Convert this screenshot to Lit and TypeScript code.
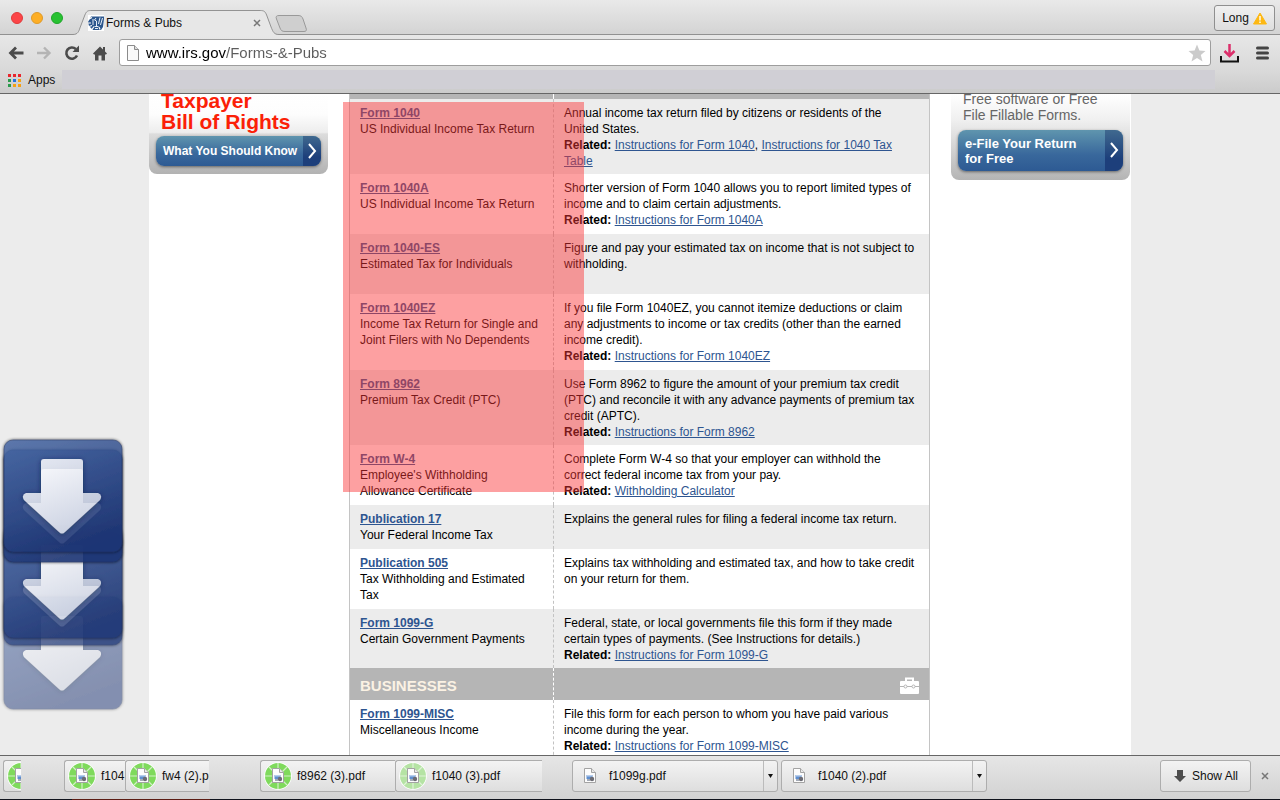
import { LitElement, html, css, svg, nothing } from "lit";
import { customElement } from "lit/decorators.js";

interface FormRow {
  name: string;
  sub: string[];
  desc: string[];
  related?: string[][];
  size?: string;
}

const individualForms: FormRow[] = [
  {
    name: "Form 1040",
    sub: ["US Individual Income Tax Return"],
    desc: ["Annual income tax return filed by citizens or residents of the", "United States."],
    related: [["Instructions for Form 1040"], ["Instructions for 1040 Tax", "Table"]],
    size: "tight",
  },
  {
    name: "Form 1040A",
    sub: ["US Individual Income Tax Return"],
    desc: ["Shorter version of Form 1040 allows you to report limited types of", "income and to claim certain adjustments."],
    related: [["Instructions for Form 1040A"]],
  },
  {
    name: "Form 1040-ES",
    sub: ["Estimated Tax for Individuals"],
    desc: ["Figure and pay your estimated tax on income that is not subject to", "withholding."],
    size: "roomy",
  },
  {
    name: "Form 1040EZ",
    sub: ["Income Tax Return for Single and", "Joint Filers with No Dependents"],
    desc: [
      "If you file Form 1040EZ, you cannot itemize deductions or claim",
      "any adjustments to income or tax credits (other than the earned",
      "income credit).",
    ],
    related: [["Instructions for Form 1040EZ"]],
  },
  {
    name: "Form 8962",
    sub: ["Premium Tax Credit (PTC)"],
    desc: [
      "Use Form 8962 to figure the amount of your premium tax credit",
      "(PTC) and reconcile it with any advance payments of premium tax",
      "credit (APTC).",
    ],
    related: [["Instructions for Form 8962"]],
    size: "tight",
  },
  {
    name: "Form W-4",
    sub: ["Employee's Withholding", "Allowance Certificate"],
    desc: ["Complete Form W-4 so that your employer can withhold the", "correct federal income tax from your pay."],
    related: [["Withholding Calculator"]],
  },
  {
    name: "Publication 17",
    sub: ["Your Federal Income Tax"],
    desc: ["Explains the general rules for filing a federal income tax return."],
  },
  {
    name: "Publication 505",
    sub: ["Tax Withholding and Estimated", "Tax"],
    desc: ["Explains tax withholding and estimated tax, and how to take credit", "on your return for them."],
  },
  {
    name: "Form 1099-G",
    sub: ["Certain Government Payments"],
    desc: ["Federal, state, or local governments file this form if they made", "certain types of payments. (See Instructions for details.)"],
    related: [["Instructions for Form 1099-G"]],
    size: "tight",
  },
];

const businessForms: FormRow[] = [
  {
    name: "Form 1099-MISC",
    sub: ["Miscellaneous Income"],
    desc: ["File this form for each person to whom you have paid various", "income during the year."],
    related: [["Instructions for Form 1099-MISC"]],
  },
];

const lines = (parts: string[]) => parts.map((p, i) => html`${i ? html`<br />` : nothing}${p}`);

const docIcon = (x: number, y: number) => svg`
  <g transform="translate(${x} ${y})">
    <path d="M.5 .5h7l4 4v10h-11z" fill="#fdfdfd" stroke="#a3a3a3" />
    <path d="M7.500 .5v4h4" fill="#e8e8e8" stroke="#a3a3a3" />
    <path d="M2.500 7h6v4h-6z" fill="#5f8fd0" />
    <path d="M2.500 7h6v1.500h-6z" fill="#b7cdec" />
    <circle cx="8" cy="11" r="2.200" fill="#6c6c74" />
    <path d="M3 11.500h3v1H3z" fill="#4a5870" />
  </g>`;

@customElement("browser-chrome")
export class BrowserChrome extends LitElement {
  static styles = css`
    :host {
      display: block;
      flex: none;
      font-family: "Liberation Sans", Arial, sans-serif;
      border-bottom: 1px solid #666;
    }
    button, input { font-family: inherit; margin: 0; padding: 0; border: 0; background: none; }
    svg { display: block; }
    .strip {
      display: flex;
      align-items: flex-end;
      height: 35px;
      background: linear-gradient(#e9e9e9, #d3d3d3);
      box-shadow: inset 0 -1px #919191;
    }
    .lights { display: flex; gap: 8px; align-self: center; padding-left: 11px; }
    .light { width: 12px; height: 12px; border-radius: 50%; box-sizing: border-box; border: 1px solid #df3b3b; background: #fc4548; }
    .light.amber { background: #fdae25; border-color: #de9a2a; }
    .light.green { background: #28c232; border-color: #1fa52a; }
    .tab { position: relative; width: 206px; height: 25px; margin-left: 10px; display: flex; align-items: center; }
    .tab .shape { position: absolute; inset: 0; }
    .tab > :not(.shape) { position: relative; }
    .tab .fav { margin-left: 15px; }
    .title { font-size: 12px; color: #111; flex: 1; padding-left: 2px; }
    .close { width: 16px; height: 16px; margin-right: 14px; display: grid; place-items: center; }
    .newtab { width: 34px; height: 17px; margin: 0 0 3px -5px; position: relative; }
    .user {
      margin: 0 5px 4px auto;
      height: 26px;
      width: 61px;
      border: 1px solid #8f8f8f;
      border-radius: 3px;
      display: flex;
      align-items: center;
      justify-content: center;
      gap: 4px;
      font-size: 12px;
      color: #111;
      background: linear-gradient(#f0f0f0, #dedede);
    }
    .bar { display: flex; align-items: center; height: 35px; background: linear-gradient(#e7e7e7, #d9d9d9); }
    .nav { display: flex; gap: 12px; padding: 0 11px 0 8px; }
    .address {
      flex: 1;
      display: flex;
      align-items: center;
      height: 25px;
      background: #fff;
      border: 1px solid #9d9d9d;
      border-radius: 3px;
      padding: 0 4px 0 7px;
    }
    .url {
      flex: 1;
      height: 23px;
      margin-left: 7px;
      font-size: 15px;
      color: transparent;
      background: linear-gradient(90deg, #000 80px, #5c5c5c 80px);
      -webkit-background-clip: text;
      background-clip: text;
      outline: none;
    }
    .tools { display: flex; align-items: center; gap: 17px; padding: 0 11px 0 9px; }
    .marks { display: flex; align-items: flex-start; height: 23px; background: linear-gradient(#dadada, #cbcbcb); }
    .apps { display: flex; align-items: center; gap: 7px; padding: 0 7px 0 8px; font-size: 12px; color: #111; height: 20px; }
    .blank { flex: 1; height: 19px; margin-right: 65px; background: #d0cfd5; }
  `;

  render() {
    const dots = ["#e8262d", "#e8262d", "#e8262d", "#2a9a4c", "#2672de", "#f5a014", "#2a9a4c", "#f5a014", "#f5a014"];
    return html`
      <div class="strip">
        <div class="lights"><span class="light"></span><span class="light amber"></span><span class="light green"></span></div>
        <div class="tab">
          <svg class="shape" width="206" height="25" viewBox="0 0 208 25" preserveAspectRatio="none">
            <path d="M0 24.500C5 24.500 6 21 7 18L12 5C13.500 1.500 14.500 .5 18 .5H189C193 .5 194 1.500 195.500 5L200 17C202 22 203 24.500 208 24.500V25H0Z" fill="#e7e7e7" />
            <path d="M0 24.500C5 24.500 6 21 7 18L12 5C13.500 1.500 14.500 .5 18 .5H189C193 .5 194 1.500 195.500 5L200 17C202 22 203 24.500 208 24.500" fill="none" stroke="#929292" />
          </svg>
          <svg class="fav" width="16" height="16" viewBox="0 0 16 16">
            <rect width="16" height="16" fill="#fff" />
            <path d="M3 1.500H16V4L15 12 13 15H5L1 11 0 7Z" fill="#2c578e" />
            <path d="M0 4.500L4 2.500M0 8h3M1 11.500l3-1M4 14.500l2-3M12 14.500l-1-2.500" stroke="#fff" stroke-width="1.200" fill="none" />
            <path d="M5 4v6M8 3L6.500 5 8.500 6V11M6.500 11.500h4M12 2.500L10.500 9M14.500 3L12.500 10M7 13.500h3" stroke="#e6eef7" fill="none" />
          </svg>
          <span class="title">Forms &amp; Pubs</span>
          <button class="close" aria-label="Close tab"><svg width="8" height="8"><path d="M1 1l6 6M7 1L1 7" stroke="#777" stroke-width="1.500" /></svg></button>
        </div>
        <button class="newtab" aria-label="New tab">
          <svg width="34" height="17"><path d="M5 .5H24C27 .5 28 1.500 29 4L32 13C33 15.500 32 16.500 30 16.500H11C8 16.500 7 15.500 6 13L2.500 4C1.500 1.500 2.500 .5 5 .5Z" fill="#cfcfcf" stroke="#999" /></svg>
        </button>
        <button class="user">Long
          <svg width="14" height="13"><path d="M7 1L13.500 12H.5Z" fill="#fdb813" stroke="#fdb813" stroke-linejoin="round" /><path d="M7 4v4.500M7 9.500V11" stroke="#fff" stroke-width="1.400" /></svg>
        </button>
      </div>
      <div class="bar">
        <div class="nav">
          <button aria-label="Back"><svg width="16" height="16"><path d="M15.500 8H3M8 2.500L2.500 8 8 13.500" stroke="#4b4b4b" stroke-width="2.800" fill="none" /></svg></button>
          <button aria-label="Forward"><svg width="16" height="16"><path d="M1 8H13M8 2.500L13.500 8 8 13.500" stroke="#b4b4b4" stroke-width="2.400" fill="none" /></svg></button>
          <button aria-label="Reload"><svg width="16" height="16"><path d="M13 10.500A5.600 5.600 0 1 1 11.800 4" stroke="#4b4b4b" stroke-width="2.600" fill="none" /><path d="M15 .5V7H8.500Z" fill="#4b4b4b" /></svg></button>
          <button aria-label="Home"><svg width="16" height="16"><path d="M8 1.500L1 8.500 2 9.500h1V15.500H6.500v-5h3v5H13V9.500h1L15 8.500 13 6.500V2h-2v2.500z" fill="#4b4b4b" /></svg></button>
        </div>
        <div class="address">
          <svg width="12" height="16"><path d="M.5 .5H7.500L11.500 4.500V15.500H.5Z" fill="#fafafa" stroke="#8b8b8b" /><path d="M7.500 .5V4.500H11.500" fill="#ddd" stroke="#8b8b8b" /></svg>
          <input class="url" aria-label="Address" value="www.irs.gov/Forms-&-Pubs" />
          <svg width="18" height="18" viewBox="0 0 18 18"><path d="M9 .5L11.400 6.600 17.500 7 12.800 11 14.500 17.500 9 14 3.500 17.500 5.200 11 .5 7 6.600 6.600Z" fill="#cbcbcb" /></svg>
        </div>
        <div class="tools">
          <button aria-label="Downloads"><svg width="19" height="20"><path d="M1 13v5.500H18V13" stroke="#111" stroke-width="2" fill="none" /><path d="M9.500 1V13M4.500 8l5 5 5-5" stroke="#dc2f6b" stroke-width="2.500" fill="none" /></svg></button>
          <button aria-label="Menu"><svg width="13" height="14"><path d="M1.500 2h10M1.500 7h10M1.500 12h10" stroke="#444" stroke-width="3" stroke-linecap="round" /></svg></button>
        </div>
      </div>
      <div class="marks">
        <button class="apps">
          <svg width="13" height="13">${dots.map((c, i) => svg`<rect x=${(i % 3) * 5} y=${Math.floor(i / 3) * 5} width="3" height="3" fill=${c} />`)}</svg>
          Apps
        </button>
        <div class="blank"></div>
      </div>
    `;
  }
}

@customElement("forms-table")
export class FormsTable extends LitElement {
  static styles = css`
    :host { display: block; font: 12px/16px "Liberation Sans", Arial, sans-serif; color: #000; }
    table { width: 100%; border-collapse: separate; border-spacing: 0; table-layout: fixed; border: solid #c4c4c4; border-width: 0 1px; box-sizing: border-box; }
    .first { width: 204px; }
    td, th { padding: 6px 0 6px 10px; vertical-align: top; text-align: left; white-space: nowrap; box-sizing: border-box; }
    td:first-child, th:first-child { border-right: 1px dashed #c2c2c2; }
    .shade td { background: #ececec; }
    .tight td { padding-bottom: 5px; }
    .roomy td { padding-bottom: 22px; }
    a { color: #2e5590; }
    .name { font-weight: bold; }
    .head th { background: #b5b5b5; height: 32px; padding: 8px 0 4px 10px; font-size: 15px; line-height: 20px; color: #fbf2e4; }
    .head th:first-child { border-right-color: #fff; }
    .head.cut th { height: 5px; padding: 0; }
    .case { display: block; margin: 1px 10px 0 auto; }
  `;

  private row(r: FormRow, shaded: boolean) {
    return html`<tr class="${shaded ? "shade" : ""} ${r.size ?? ""}">
      <td><a class="name" href="#">${r.name}</a><br />${lines(r.sub)}</td>
      <td>${lines(r.desc)}${r.related
        ? html`<br /><b>Related:</b> ${r.related.map((l, i) => html`${i ? ", " : nothing}<a href="#">${lines(l)}</a>`)}`
        : nothing}</td>
    </tr>`;
  }

  render() {
    return html`<table>
      <colgroup><col class="first" /><col /></colgroup>
      <tbody>
        <tr class="head cut"><th></th><th></th></tr>
        ${individualForms.map((r, i) => this.row(r, i % 2 === 0))}
        <tr class="head">
          <th>BUSINESSES</th>
          <th>
            <svg class="case" width="19" height="17">
              <path d="M6 4V1.500h7V4" stroke="#fff" stroke-width="2" fill="none" />
              <rect y="4" width="19" height="13" rx="1" fill="#fff" />
              <path d="M0 9.500h4M7 9.500h5M15 9.500h4" stroke="#b5b5b5" />
              <circle cx="5.500" cy="9.500" r="1.500" fill="#fff" stroke="#b5b5b5" />
              <circle cx="13.500" cy="9.500" r="1.500" fill="#fff" stroke="#b5b5b5" />
            </svg>
          </th>
        </tr>
        ${businessForms.map((r) => this.row(r, false))}
      </tbody>
    </table>`;
  }
}

@customElement("download-shelf")
export class DownloadShelf extends LitElement {
  static styles = css`
    :host {
      display: flex;
      flex: none;
      align-items: center;
      height: 44px;
      box-sizing: border-box;
      padding: 0 7px 3px 3px;
      font: 12px "Liberation Sans", Arial, sans-serif;
      border-top: 1px solid #666;
      background: linear-gradient(#e6e6e6, #d2d2d2);
    }
    svg { display: block; flex: none; }
    button { font: inherit; color: #111; margin: 0; padding: 0; white-space: nowrap; }
    .item {
      display: flex;
      align-items: center;
      height: 32px;
      box-sizing: border-box;
      border: 1px solid #adadad;
      border-radius: 3px;
      background: linear-gradient(#f3f3f3, #dedede);
      overflow: hidden;
      padding-left: 3px;
      gap: 5px;
      flex: none;
    }
    .item.cut { border-right: 0; border-radius: 3px 0 0 3px; }
    .item.done { padding-left: 11px; gap: 12px; margin-right: 3px; }
    .drop { margin-left: auto; width: 14px; height: 30px; border: 0; border-left: 1px solid #bbb; background: none; display: grid; place-items: center; }
    .label { border: 0; background: none; }
    .all { width: 91px; margin-left: auto; padding-left: 13px; gap: 6px; }
    .close { border: 0; background: none; width: 16px; height: 16px; margin-left: 6px; display: grid; place-items: center; }
  `;

  private ring(faded: boolean) {
    const fill = faded ? "#b5e3a4" : "#7fda5c";
    return svg`
      <circle cx="14" cy="14" r="13.800" fill="#fff" />
      <circle cx="14" cy="14" r="13" fill=${fill} />
      <path d="M14 1v26M1 14h26M5 5l18 18M23 5L5 23" stroke="#eef7e9" stroke-width="1.200" opacity=".75" />
      <circle cx="14" cy="14" r="6" fill="#e2efdc" />
      ${docIcon(8, 6)}`;
  }

  private progress(name: string, width: number, after: number, faded = false) {
    return html`<button class="item cut" style="width:${width}px;margin-right:${after}px">
      <svg width="28" height="28">${this.ring(faded)}</svg>${name}
    </button>`;
  }

  private done(name: string, width: number) {
    return html`<div class="item done" style="width:${width}px">
      <svg width="13" height="16">${docIcon(0, 0)}</svg>
      <button class="label">${name}</button>
      <button class="drop" aria-label="Options for ${name}"><svg width="5" height="5"><path d="M0 0h5L2.500 4z" fill="#111" /></svg></button>
    </div>`;
  }

  render() {
    return html`
      ${this.progress("", 18, 43)}
      ${this.progress("f104", 61, 0)}
      ${this.progress("fw4 (2).pdf", 84, 51)}
      ${this.progress("f8962 (3).pdf", 135, 0)}
      ${this.progress("f1040 (3).pdf", 147, 30, true)}
      ${this.done("f1099g.pdf", 206)}
      ${this.done("f1040 (2).pdf", 206)}
      <button class="item all">
        <svg width="12" height="12"><path d="M3 0h6v6h3L6 12 0 6h3z" fill="#4d4d4d" /></svg>Show All
      </button>
      <button class="close" aria-label="Close downloads"><svg width="8" height="8"><path d="M1 1l6 6M7 1L1 7" stroke="#777" stroke-width="1.500" /></svg></button>
    `;
  }
}

@customElement("app-root")
export class AppRoot extends LitElement {
  static styles = css`
    :host {
      display: flex;
      flex-direction: column;
      height: 100vh;
      overflow: hidden;
      font-family: "Liberation Sans", Arial, sans-serif;
    }
    main { flex: 1; min-height: 0; overflow: hidden; background: #ececec; position: relative; }
    .edge { flex: none; height: 1px; background: linear-gradient(90deg, #10131c 72px, #5c1d14 72px 210px, #10131c 210px); }
    .page {
      width: min(982px, 100%);
      min-height: 100%;
      margin: 0 auto;
      background: #fff;
      display: grid;
      grid-template-columns: 179px 581px 179px;
      gap: 21px;
      align-items: start;
      position: relative;
    }
    .card { border-radius: 0 0 8px 8px; overflow: hidden; box-sizing: border-box; padding: 0 7px 8px; background: linear-gradient(#fff, #f0f0f0 30%, #b4b4b4); }
    .card.rights { background: linear-gradient(#fff 0, #fdfdfd 25%, #ededed 48%, #dcdcdc 50%, #b2b2b2); }
    .rights h2 { margin: -4px 0 0; padding-left: 5px; font-size: 21px; line-height: 21px; color: #fb2007; white-space: nowrap; }
    .card p { margin: -3px 0 0; padding: 0 0 0 5px; font-size: 14px; line-height: 16px; color: #666; }
    .cta {
      display: flex;
      align-items: stretch;
      width: 100%;
      border-radius: 8px;
      overflow: hidden;
      background: linear-gradient(#5f95ae, #39689c 60%, #2d5a93);
      box-shadow: 0 1px 3px #0007;
      color: #fff;
      font-size: 12px;
      font-weight: bold;
      line-height: 15px;
      text-decoration: none;
      white-space: nowrap;
    }
    .cta.one { height: 30px; margin-top: 4px; }
    .cta.two { height: 41px; margin: 7px 0 1px; font-size: 13px; }
    .cta span { flex: 1; align-self: center; padding-left: 7px; }
    .cta svg { flex: none; width: 18px; height: 100%; background: linear-gradient(#40698f, #1d3f7b 70%); }
    .mask { position: absolute; left: 194px; top: 8px; width: 241px; height: 390px; background: rgba(250, 53, 56, 0.47); pointer-events: none; }
    .arrows { position: absolute; left: 0; top: 340px; }
  `;

  private tile(y: number, opacity: number) {
    return svg`<g transform="translate(4 ${y})" opacity=${opacity}>
      <rect width="118" height="112" rx="9" fill="url(#tile)" stroke="#1c2f5f" stroke-width=".6" filter="url(#glow)" />
      <path d="M40 19H76Q79 19 79 22V53H94Q99 55 96 60L61 92Q58 95 55 92L20 60Q17 55 22 53H37V22Q37 19 40 19Z" fill="url(#arrow)" filter="url(#soft)" />
    </g>`;
  }

  render() {
    return html`
      <browser-chrome></browser-chrome>
      <main>
        <div class="page">
          <section class="card rights">
            <h2>Taxpayer<br />Bill of Rights</h2>
            <a class="cta one" href="#"><span>What You Should Know</span><svg viewBox="0 0 18 30"><path d="M6 8l6 7-6 7" stroke="#fff" stroke-width="2" fill="none" /></svg></a>
          </section>
          <forms-table></forms-table>
          <section class="card">
            <p>Free software or Free<br />File Fillable Forms.</p>
            <a class="cta two" href="#"><span>e-File Your Return<br />for Free</span><svg viewBox="0 0 18 41"><path d="M6 13l6 7-6 7" stroke="#fff" stroke-width="2" fill="none" /></svg></a>
          </section>
          <div class="mask"></div>
        </div>
        <svg class="arrows" width="128" height="282" viewBox="0 0 128 282">
          <defs>
            <linearGradient id="tile" x1="0" y1="0" x2=".4" y2="1">
              <stop offset="0" stop-color="#4767a3" /><stop offset="1" stop-color="#1f3674" />
            </linearGradient>
            <linearGradient id="arrow" x1="0" y1="0" x2=".4" y2="1">
              <stop offset="0" stop-color="#fdfdff" /><stop offset="1" stop-color="#cfd5e4" />
            </linearGradient>
            <filter id="glow" x="-10%" y="-10%" width="120%" height="120%"><feDropShadow dx="0" dy="0" stdDeviation="1.800" flood-color="#000" flood-opacity=".8" /></filter>
            <filter id="soft" x="-20%" y="-20%" width="140%" height="140%"><feDropShadow dx="0" dy="1" stdDeviation="2.500" flood-color="#0c1a42" flood-opacity=".7" /></filter>
          </defs>
          ${this.tile(163, 0.5)} ${this.tile(99, 0.7)} ${this.tile(92, 0.75)} ${this.tile(16, 0.9)} ${this.tile(6, 0.87)}
        </svg>
      </main>
      <download-shelf></download-shelf>
      <div class="edge"></div>
    `;
  }
}
